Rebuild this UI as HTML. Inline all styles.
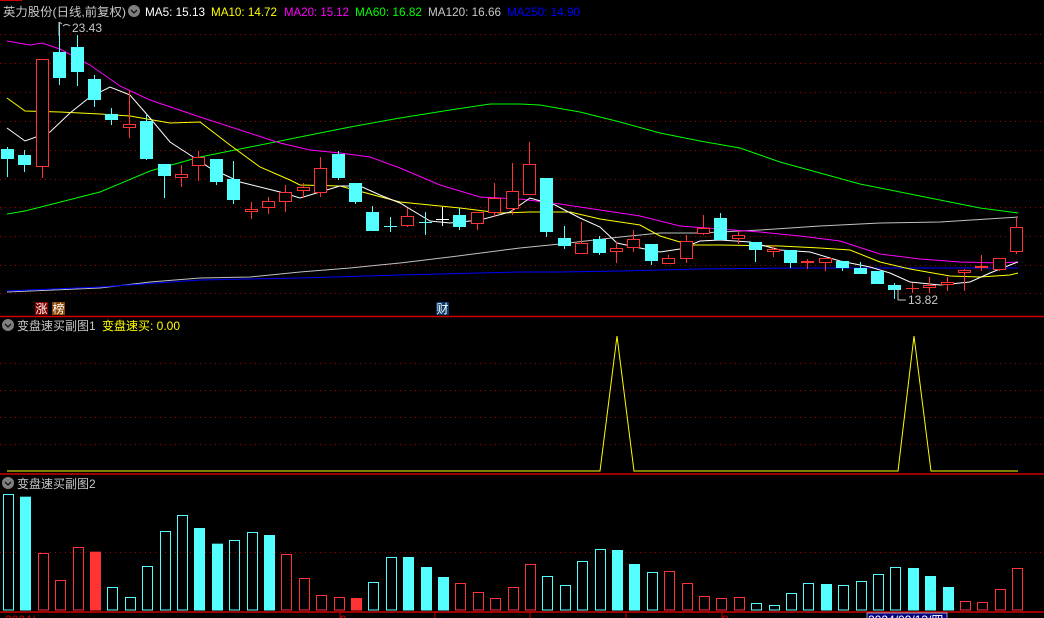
<!DOCTYPE html>
<html><head><meta charset="utf-8">
<style>
html,body{margin:0;padding:0;background:#000;width:1044px;height:618px;overflow:hidden}
svg{display:block}
text{font-family:"Liberation Sans","Noto Sans CJK SC",sans-serif;font-size:12px}
</style></head>
<body>
<svg id="s" width="1044" height="618" viewBox="0 0 1044 618" xmlns="http://www.w3.org/2000/svg">
<rect width="1044" height="618" fill="#000"/>
<g id="g"></g>
<line x1="0" y1="0.5" x2="22" y2="0.5" stroke="#c00" stroke-width="1"/>
<line x1="0" y1="316.5" x2="1044" y2="316.5" stroke="#d00000" stroke-width="1.5"/>
<line x1="0" y1="474" x2="1044" y2="474" stroke="#d00000" stroke-width="1.5"/>
<line x1="0" y1="612" x2="1044" y2="612" stroke="#d00000" stroke-width="1.5"/>
<!-- header -->
<text x="3" y="16" fill="#c8c8c8" textLength="123" lengthAdjust="spacingAndGlyphs">英力股份(日线,前复权)</text>
<circle cx="134" cy="11" r="6" fill="#808080"/><path d="M131 10 l3 3 l3 -3" stroke="#111" stroke-width="1.3" fill="none"/>
<text x="145" y="16" fill="#fff" textLength="60" lengthAdjust="spacingAndGlyphs">MA5: 15.13</text>
<text x="211" y="16" fill="#ffff00" textLength="66" lengthAdjust="spacingAndGlyphs">MA10: 14.72</text>
<text x="284" y="16" fill="#ff00ff" textLength="65" lengthAdjust="spacingAndGlyphs">MA20: 15.12</text>
<text x="355" y="16" fill="#00ff00" textLength="67" lengthAdjust="spacingAndGlyphs">MA60: 16.82</text>
<text x="428" y="16" fill="#c8c8c8" textLength="73" lengthAdjust="spacingAndGlyphs">MA120: 16.66</text>
<text x="507" y="16" fill="#0000ff" textLength="73" lengthAdjust="spacingAndGlyphs">MA250: 14.90</text>
<text x="72" y="32" fill="#c8c8c8">23.43</text>
<path d="M59 36 V22 M59 22 l3 2 M63 26 q3 -3 7 0" stroke="#c8c8c8" fill="none"/>
<text x="908" y="304" fill="#c8c8c8">13.82</text>
<path d="M898 288 V300 M898 300 h8" stroke="#c8c8c8" fill="none"/>
<!-- badges -->
<rect x="35" y="302" width="13" height="13" fill="#800000"/><text x="35.5" y="313" fill="#fff" style="font-size:12px">涨</text>
<rect x="52" y="302" width="13" height="13" fill="#8b4500"/><text x="52.5" y="313" fill="#fff" style="font-size:12px">榜</text>
<rect x="436" y="302" width="13" height="13" fill="#0a3a6a"/><text x="436.5" y="313" fill="#fff" style="font-size:12px">财</text>
<!-- sub1 header -->
<circle cx="8" cy="325" r="6" fill="#808080"/><path d="M5 324 l3 3 l3 -3" stroke="#111" stroke-width="1.3" fill="none"/>
<text x="17" y="330" fill="#c8c8c8">变盘速买副图1</text>
<text x="102" y="330" fill="#ffff00">变盘速买: 0.00</text>
<polyline points="7,471 600,471 617,336 634,471 898,471 914,336 931,471 1018,471" stroke="#ffff00" fill="none" stroke-width="1"/>
<!-- sub2 header -->
<circle cx="8" cy="483" r="6" fill="#808080"/><path d="M5 482 l3 3 l3 -3" stroke="#111" stroke-width="1.3" fill="none"/>
<text x="17" y="488" fill="#c8c8c8">变盘速买副图2</text>
<!-- axis -->
<text x="5" y="624" fill="#d00000">2024/</text>
<line x1="340" y1="612" x2="340" y2="618" stroke="#d00000"/><text x="340" y="624" fill="#d00000">9</text>
<line x1="435" y1="612" x2="435" y2="618" stroke="#d00000"/>
<line x1="530" y1="612" x2="530" y2="618" stroke="#d00000"/>
<line x1="626" y1="612" x2="626" y2="618" stroke="#d00000"/>
<line x1="722" y1="612" x2="722" y2="618" stroke="#d00000"/><text x="722" y="624" fill="#d00000">9</text>
<rect x="867" y="613" width="80" height="6" fill="#000080" stroke="#c8c8c8" stroke-width="0.8"/>
<text x="868" y="624" fill="#fff">2024/09/13/四</text>
</svg>
<script>
var g=document.getElementById('g'),h='';
function L(x1,y1,x2,y2,c,d){h+='<line x1="'+x1+'" y1="'+y1+'" x2="'+x2+'" y2="'+y2+'" stroke="'+c+'" stroke-width="1"'+(d?' stroke-dasharray="1 4"':'')+'/>';}
[34,63,92,121,150,179,207,236,265,293].forEach(function(y){L(0,y+.5,1044,y+.5,'#a00000',1);});
[363,390,417,444].forEach(function(y){L(0,y+.5,1044,y+.5,'#a00000',1);});
L(0,552.5,1044,552.5,'#a00000',1);
function P(pts,c){h+='<polyline points="'+pts+'" fill="none" stroke="'+c+'" stroke-width="1"/>';}
P("7,292 100,288 150,282 200,278 250,277 300,272 350,268 400,263 450,257 520,248 560,244 620,237 660,233 700,233 760,230 820,226 880,223 940,222 1018,217","#c0c0c0");
P("7,291 100,287 200,280 300,278 400,275 520,272 560,272 620,271 700,269 800,268 900,268 1018,268","#0000ff");
P("7,214 25,211 100,192 150,171 200,157 250,147 300,137 350,127 400,118 450,110 490,104 520,104 540,105 580,112 620,122 660,133 700,141 740,148 780,162 820,173 860,184 900,192 940,200 980,208 1018,213","#00ff00");
P("7,41 30,45 42,43 60,49 90,65 120,86 150,100 200,117 240,130 280,143 310,150 340,153 370,157 400,168 440,185 480,197 520,199 560,204 600,210 640,216 680,226 720,229 760,232 800,236 840,241 880,254 920,259 960,262 1000,263 1018,262","#ff00ff");
P("7,98 25,111 60,112 100,114 130,116 170,123 200,122 230,145 260,167 290,180 300,185 340,186 400,202 460,208 500,213 530,212 570,212 600,219 640,225 660,236 690,245 720,245 780,246 820,248 850,250 880,262 910,269 950,276 980,277 1010,275 1018,273","#ffff00");
P("7,128 25,141 50,132 70,113 90,97 110,87 130,95 150,118 170,142 190,155 210,168 240,182 280,192 300,198 320,192 340,186 360,186 380,195 400,203 430,221 450,223 480,220 510,212 530,198 555,205 580,218 600,227 617,243 640,248 660,252 680,249 700,241 720,240 750,242 780,250 810,252 840,261 870,267 890,273 910,282 940,285 970,282 990,273 1010,265 1018,262","#ffffff");
var C='#54ffff',R='#ff3333',W='#ffffff';
var k=[['c',149,159,147,177],['c',155,165,150,172],['r',59,167,59,178],['c',52,78,23,85],['c',47,72,35,86],['c',79,100,75,107],['c',114,120,108,125],['r',124,128,90,138],['c',121,159,115,160],['c',164,176,164,198],
['r',174,178,165,187],['r',157,166,151,181],['c',159,182,159,185],['c',179,200,161,204],['r',209,212,202,219],['r',201,208,197,214],['r',192,202,185,212],['r',187,191,183,198],['r',168,193,157,197],['c',154,178,151,180],
['c',183,202,183,204],['c',212,231,206,231],['c',226,226,217,232],['r',216,226,208,227],['c',222,222,212,235],['w',219,219,207,226],['c',215,227,208,230],['r',212,224,212,230],['r',198,213,183,217],['r',191,209,163,215],
['r',164,195,142,195],['c',178,232,178,237],['c',238,246,226,249],['r',243,254,222,254],['c',239,253,236,255],['r',248,252,242,263],['r',239,248,230,252],['c',244,261,244,265],['r',258,264,255,264],['r',241,259,235,263],
['r',228,234,215,235],['c',218,240,213,240],['r',235,239,230,244],['c',242,250,242,262],['r',249,252,245,257],['c',250,263,250,268],['r',261,263,259,269],['r',258,263,258,271],['c',261,268,261,271],['c',268,274,262,274],
['c',271,284,271,284],['c',285,290,283,299],['r',288,288,283,293],['r',285,288,277,293],['r',282,285,277,291],['r',270,273,269,291],['r',266,268,255,271],['r',258,270,258,271],['r',227,252,218,254]];
k.forEach(function(d,i){var x=Math.round(1+17.4*i),cx=x+6.5,col=d[0]=='c'?C:d[0]=='r'?R:W;
 L(cx,d[3],cx,d[4],col);
 if(d[2]-d[1]<1){L(x,d[1]+.5,x+13,d[1]+.5,col);}
 else if(d[0]=='c'){h+='<rect x="'+x+'" y="'+d[1]+'" width="13" height="'+(d[2]-d[1])+'" fill="'+C+'"/>';}
 else{h+='<rect x="'+(x+.5)+'" y="'+(d[1]+.5)+'" width="12" height="'+(d[2]-d[1]-1)+'" fill="#000" stroke="'+col+'"/>';}
});
var vt=[42,50,219,300,201,215,321,351,258,153,105,144,191,180,156,165,222,294,345,351,354,306,231,231,261,291,309,336,354,321,252,288,315,243,207,210,252,276,273,309,348,354,351,369,375,339,309,312,315,303,282,261,264,288,321,363,366,327,264];
var vy="HFRRRXHHHHHFFHHFRRRRXHHFFFRRRRRHHHHFFHRRRRRHHHHFHHHHFFFRRRR";
vt.forEach(function(t,i){var x=Math.round(3+17.4*i),y=480+t/3,b=610.5,ty=vy[i];
 if(ty=='F')h+='<rect x="'+x+'" y="'+y+'" width="11" height="'+(b-y)+'" fill="'+C+'"/>';
 else if(ty=='X')h+='<rect x="'+x+'" y="'+y+'" width="11" height="'+(b-y)+'" fill="'+R+'"/>';
 else h+='<rect x="'+(x+.5)+'" y="'+(y+.5)+'" width="10" height="'+(b-y-1)+'" fill="none" stroke="'+(ty=='H'?C:R)+'"/>';
});
g.innerHTML=h;
</script>
</body></html>
